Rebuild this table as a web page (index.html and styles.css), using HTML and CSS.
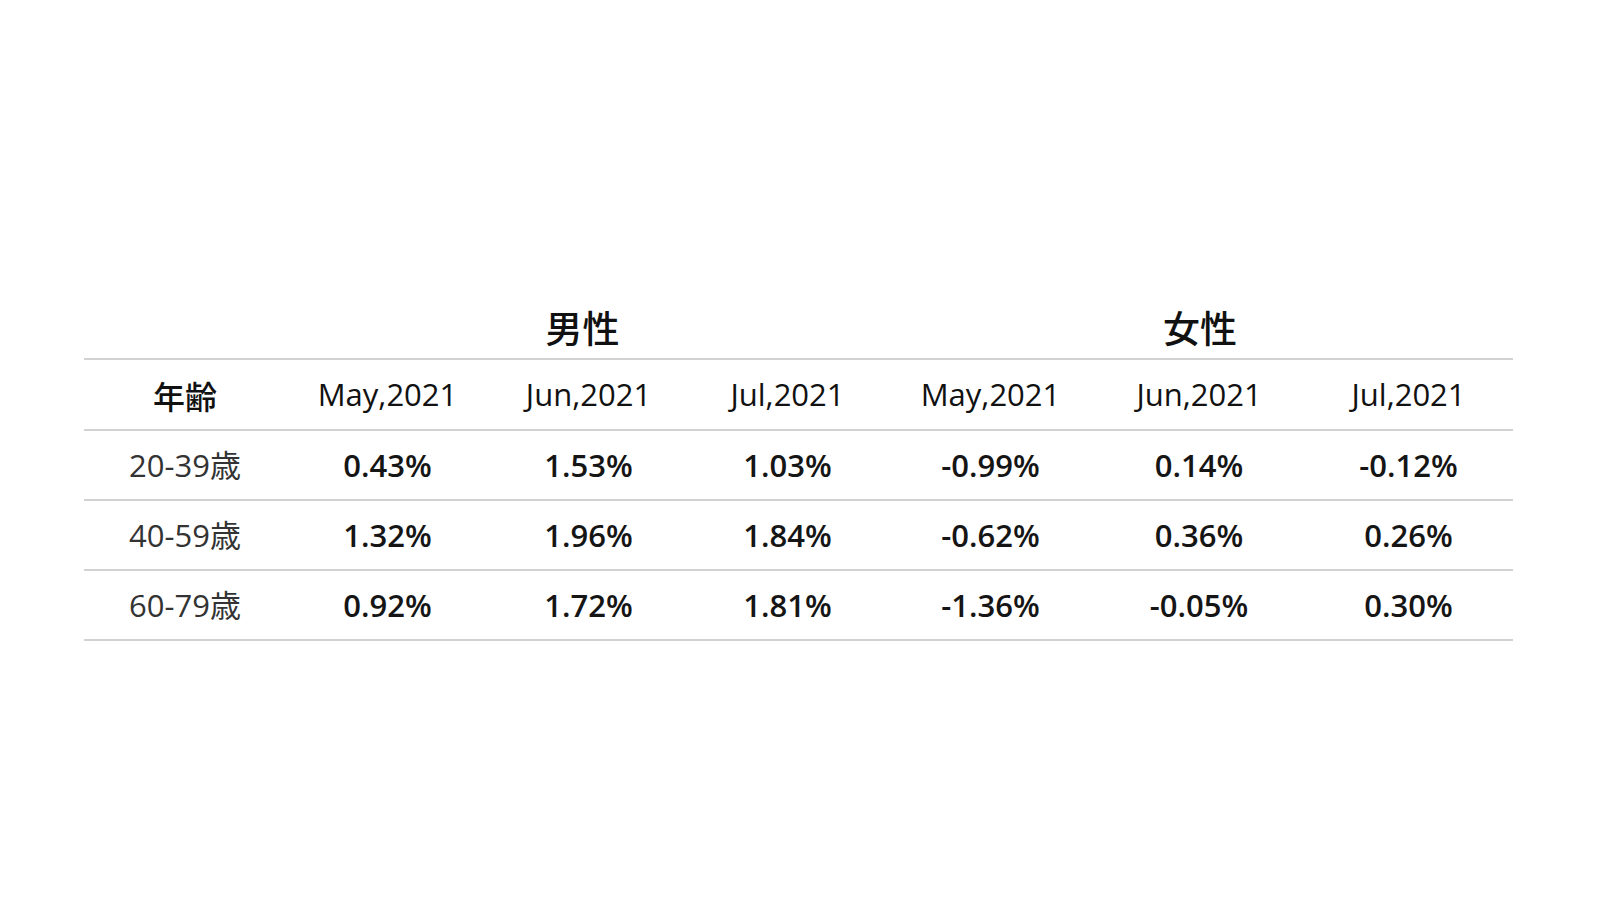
FILE: index.html
```html
<!DOCTYPE html>
<html lang="ja">
<head>
<meta charset="utf-8">
<title>年齢別</title>
<link rel="stylesheet" href="styles.css">
</head>
<body>
<main class="page">
  <table class="stats">
    <colgroup>
      <col class="c1"><col class="c2"><col class="c3"><col class="c4"><col class="c5"><col class="c6"><col class="c7">
    </colgroup>
    <thead>
      <tr class="group-row">
        <th></th>
        <th colspan="3" class="group group-m">男性</th>
        <th colspan="3" class="group">女性</th>
      </tr>
      <tr class="head-row">
        <th class="age-head">年齢</th>
        <th>May,2021</th>
        <th>Jun,2021</th>
        <th>Jul,2021</th>
        <th>May,2021</th>
        <th>Jun,2021</th>
        <th>Jul,2021</th>
      </tr>
    </thead>
    <tbody>
      <tr>
        <td class="age">20-39歳</td>
        <td>0.43%</td><td>1.53%</td><td>1.03%</td>
        <td>-0.99%</td><td>0.14%</td><td>-0.12%</td>
      </tr>
      <tr>
        <td class="age">40-59歳</td>
        <td>1.32%</td><td>1.96%</td><td>1.84%</td>
        <td>-0.62%</td><td>0.36%</td><td>0.26%</td>
      </tr>
      <tr>
        <td class="age">60-79歳</td>
        <td>0.92%</td><td>1.72%</td><td>1.81%</td>
        <td>-1.36%</td><td>-0.05%</td><td>0.30%</td>
      </tr>
    </tbody>
  </table>
</main>
</body>
</html>
```

FILE: styles.css
```css
html, body {
  margin: 0;
  padding: 0;
  background: #ffffff;
}

body {
  width: 1600px;
  height: 900px;
  overflow: hidden;
  font-family: "Open Sans", "Noto Sans CJK JP", sans-serif;
  color: #111111;
}

.page {
  padding-top: 300px;
  padding-left: 84px;
}

.stats {
  width: 1429px;
  table-layout: fixed;
  border-collapse: collapse;
  border-spacing: 0;
}

.c1 { width: 202px; }
.c2 { width: 203px; }
.c3 { width: 199px; }
.c4 { width: 199px; }
.c5 { width: 207px; }
.c6 { width: 210px; }
.c7 { width: 209px; }

.stats th,
.stats td {
  padding: 0;
  text-align: center;
  vertical-align: middle;
  font-size: 31px;
  line-height: 1;
}

.group-row th {
  height: 54px;
  padding-bottom: 4px;
  border: 0;
}

.group {
  font-family: "Noto Sans CJK JP", sans-serif;
  font-weight: 500;
  font-size: 37px !important;
  color: #111111;
}

.group-m {
  padding-right: 8px !important;
}

.head-row th {
  height: 69px;
  border-top: 2px solid #d2d2d2;
  border-bottom: 2px solid #d2d2d2;
  font-weight: 500;
  color: #111111;
}

.head-row .age-head {
  font-family: "Noto Sans CJK JP", sans-serif;
  font-weight: 500;
  font-size: 32px;
}

.stats tbody td {
  height: 68px;
  border-bottom: 2px solid #d2d2d2;
  font-weight: 600;
  color: #151515;
}

.stats tbody td.age {
  font-weight: 400;
  color: #333333;
}
```
